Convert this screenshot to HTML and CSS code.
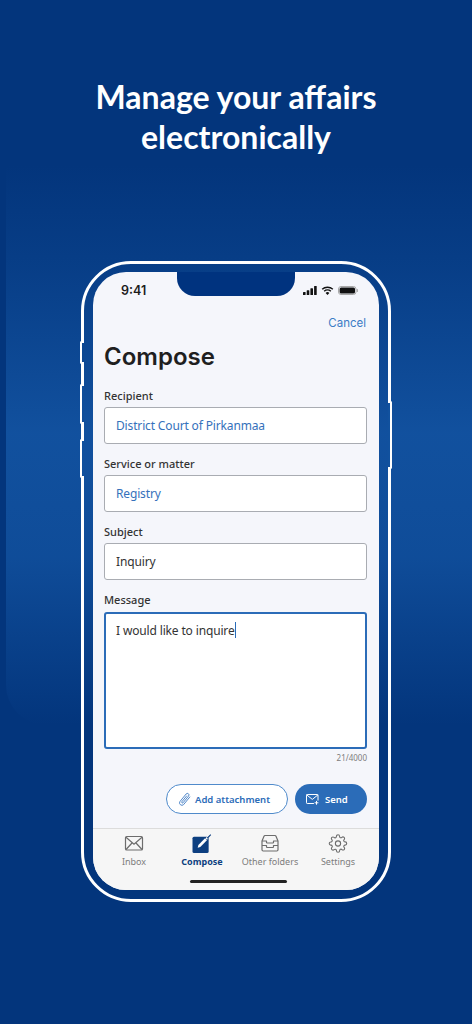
FILE: index.html
```html
<!DOCTYPE html>
<html lang="en">
<head>
<meta charset="utf-8">
<title>Compose</title>
<link rel="stylesheet" href="styles.css">
</head>
<body>
<main class="poster">
  <div class="glow"></div>
  <h1 class="headline">Manage your affairs<br>electronically</h1>
  <div class="phone">
    <span class="side s1"></span><span class="side s2"></span><span class="side s3"></span><span class="side s4"></span>
    <div class="screen">
      <div class="notch"></div>
      <div class="status">
        <span class="time">9:41</span>
        <span class="status-icons">
          <svg width="14" height="9" viewBox="0 0 14 9"><rect x="0" y="6" width="2.6" height="3" rx=".6"/><rect x="3.7" y="4.2" width="2.6" height="4.8" rx=".6"/><rect x="7.4" y="2.2" width="2.6" height="6.8" rx=".6"/><rect x="11.1" y="0" width="2.6" height="9" rx=".6"/></svg>
          <svg width="13" height="9" viewBox="0 0 13 9"><path d="M6.5 1.9c1.8 0 3.5.7 4.8 1.9l1-1A8.4 8.4 0 0 0 6.5.4 8.4 8.4 0 0 0 .7 2.8l1 1a7 7 0 0 1 4.8-1.9z"/><path d="M6.5 4.6c1.1 0 2 .4 2.8 1.1l1-1a5.6 5.6 0 0 0-7.6 0l1 1c.8-.7 1.7-1.1 2.8-1.1z"/><path d="M6.5 9 8.4 7a2.8 2.8 0 0 0-3.8 0z"/></svg>
          <svg width="20" height="9" viewBox="0 0 20 9"><rect x=".5" y=".5" width="17.5" height="8" rx="2.5" fill="none" stroke="#a8a8a8"/><rect x="1.6" y="1.5" width="15.4" height="6" rx="1.5"/><rect x="18.7" y="3" width="1.2" height="3" rx=".6" fill="#a8a8a8"/></svg>
        </span>
      </div>
      <div class="nav"><span class="cancel">Cancel</span></div>
      <div class="form">
        <h2 class="title">Compose</h2>
        <div class="field"><label class="label">Recipient</label><div class="input link">District Court of Pirkanmaa</div></div>
        <div class="field"><label class="label">Service or matter</label><div class="input link">Registry</div></div>
        <div class="field"><label class="label">Subject</label><div class="input">Inquiry</div></div>
        <div class="field"><label class="label label-message">Message</label><div class="textarea">I would like to inquire<span class="caret"></span></div></div>
        <div class="count">21/4000</div>
        <div class="actions">
          <span class="btn btn-outline">
            <svg width="13" height="15" viewBox="0 0 13 15" fill="none" stroke="#3f7cc4" stroke-width=".9" stroke-linecap="round"><path d="M11.8 5 5.600 12.600a2.400 2.400 0 0 1-3.700-3L8.100 2a1.600 1.600 0 0 1 2.500 2L5 10.800a.8.8 0 0 1-1.200-1L8.600 4"/></svg>
            Add attachment
          </span>
          <span class="btn btn-solid">
            <svg width="13" height="11" viewBox="0 0 13 11" fill="none" stroke="#fff" stroke-width="1" stroke-linecap="round" stroke-linejoin="round"><path d="M7.500 9.500H1.200a.7.7 0 0 1-.7-.7V1.200c0-.4.300-.7.700-.7h10.100c.4 0 .7.300.7.700v5"/><path d="m.8 1 5.500 4.400L11.800 1"/><path d="M10.500 7.300v3M9 8.800h3"/></svg>
            Send
          </span>
        </div>
      </div>
      <nav class="tabs">
        <div class="tab">
          <svg width="20" height="18" viewBox="0 0 20 18" fill="none" stroke="#6d6d6d" stroke-width="1.200"><rect x="1.500" y="2" width="17" height="13.500" rx="1.300"/><path d="m2 2.700 8 7 8-7M2 15l6-6.500M18 15l-6-6.500"/></svg>
          <span>Inbox</span>
        </div>
        <div class="tab active">
          <svg width="20" height="20" viewBox="0 0 20 20" fill="none"><rect x="0" y="3" width="17" height="17" rx="1.600" fill="#0d3f80"/><path d="m5.500 14.500.7-2.800 7-7.200 2 2-7 7.200z" fill="#fff"/><path d="m14.500 5.200 4.300-4.400" stroke="#fff" stroke-width="2.200"/><path d="m15.500 4.500 3.700-3.800" stroke="#0d3f80" stroke-width="1.300"/></svg>
          <span>Compose</span>
        </div>
        <div class="tab">
          <svg width="18" height="18" viewBox="0 0 18 18" fill="none" stroke="#6d6d6d" stroke-width="1.200" stroke-linejoin="round"><path d="M1 6.500 3 1.800c.2-.5.500-.8 1-.8h10c.5 0 .8.300 1 .8l2 4.700v8.800c0 .7-.5 1.200-1.200 1.200H2.200c-.7 0-1.200-.5-1.200-1.200z"/><path d="M1 6.500h4.500v1.300c0 .4.300.7.700.7h5.600c.4 0 .7-.3.700-.7V6.500H17M1 11h4.500v1.300c0 .4.300.7.700.7h5.600c.4 0 .7-.3.700-.7V11H17"/></svg>
          <span>Other folders</span>
        </div>
        <div class="tab">
          <svg width="20" height="20" viewBox="0 0 24 24" fill="none" stroke="#6d6d6d" stroke-width="1.400" stroke-linejoin="round"><circle cx="12" cy="12" r="3.300"/><path d="M19.400 15a1.650 1.650 0 0 0 .33 1.820l.06.06a2 2 0 0 1 0 2.830 2 2 0 0 1-2.830 0l-.06-.06a1.650 1.650 0 0 0-1.820-.33 1.650 1.650 0 0 0-1 1.510V21a2 2 0 0 1-2 2 2 2 0 0 1-2-2v-.09A1.650 1.650 0 0 0 9 19.400a1.650 1.650 0 0 0-1.820.33l-.06.06a2 2 0 0 1-2.830 0 2 2 0 0 1 0-2.830l.06-.06a1.650 1.650 0 0 0 .33-1.820 1.650 1.650 0 0 0-1.510-1H3a2 2 0 0 1-2-2 2 2 0 0 1 2-2h.09A1.650 1.650 0 0 0 4.600 9a1.650 1.650 0 0 0-.33-1.820l-.06-.06a2 2 0 0 1 0-2.830 2 2 0 0 1 2.830 0l.06.06a1.650 1.650 0 0 0 1.820.33H9a1.650 1.650 0 0 0 1-1.510V3a2 2 0 0 1 2-2 2 2 0 0 1 2 2v.09a1.650 1.650 0 0 0 1 1.510 1.650 1.650 0 0 0 1.820-.33l.06-.06a2 2 0 0 1 2.830 0 2 2 0 0 1 0 2.830l-.06.06a1.650 1.650 0 0 0-.33 1.820V9a1.650 1.650 0 0 0 1.510 1H21a2 2 0 0 1 2 2 2 2 0 0 1-2 2h-.09a1.650 1.650 0 0 0-1.510 1z"/></svg>
          <span>Settings</span>
        </div>
      </nav>
      <div class="home-wrap"><div class="home"></div></div>
    </div>
  </div>
</main>
</body>
</html>
```
FILE: styles.css
```css
* { box-sizing: border-box; }
html, body { margin: 0; padding: 0; }
body { background: #03357c; font-family: "Noto Sans", sans-serif; }
.poster { position: relative; width: 472px; height: 1024px; overflow: hidden; background: #03357c; padding-top: 77px; }
.glow { position: absolute; left: 6px; right: -40px; top: 165px; height: 560px; border-radius: 0 0 0 40px; background: linear-gradient(180deg, rgba(18,82,160,0) 0, rgba(18,82,160,.3) 18%, rgba(18,82,160,.95) 48%, rgba(18,82,160,.8) 70%, rgba(18,82,160,0) 100%); }
.headline { position: relative; margin: 0; text-align: center; color: #fff; font-family: "Lato", sans-serif; font-size: 32px; line-height: 40px; font-weight: 700; }
.phone { position: relative; width: 310px; height: 641px; margin: 104px 0 0 81px; border: 3px solid #fff; border-radius: 50px; padding: 8px 9px; }
.side { position: absolute; width: 4px; border: 2px solid #fff; border-right: 0; left: -4px; border-radius: 2px 0 0 2px; }
.s1 { top: 77px; height: 23px; background: #0c4792; }
.s2 { top: 119.500px; height: 40px; background: #0f4d9a; }
.s3 { top: 175px; height: 39px; background: #10509e; }
.s4 { left: auto; right: -4px; top: 136.500px; height: 68px; border: 2px solid #fff; border-left: 0; border-radius: 0 2px 2px 0; background: #11519e; }
.screen { position: relative; width: 286px; height: 618px; background: #f5f6fb; border-radius: 33px; overflow: hidden; display: flex; flex-direction: column; }
.notch { position: absolute; left: 84px; top: 0; width: 118px; height: 24px; background: #00337f; border-radius: 0 0 18px 18px; }
.status { display: flex; justify-content: space-between; align-items: center; height: 36px; padding: 1px 21px 0 28px; }
.time { font: 600 12.500px "Inter", sans-serif; color: #1c1c1c; }
.status-icons { display: flex; align-items: center; gap: 4px; }
.status-icons svg { fill: #111; display: block; }
.nav { display: flex; justify-content: flex-end; padding: 8px 13px 0; height: 28px; }
.cancel { font: 400 11.500px "Inter", sans-serif; color: #3c7cc6; }
.form { padding: 0 12px 0 11px; flex: 1; }
.title { margin: 3px 0 0; font: 600 24px/36px "Inter", sans-serif; color: #1f1f1f; height: 35px; }
.field { margin-top: 12px; }
.title + .field { margin-top: 14px; }
.label { display: block; font-size: 11px; font-weight: 500; line-height: 16px; color: #333; margin-bottom: 3px; }
.label-message { margin-bottom: 4px; }
.input { height: 37px; background: #fff; border: 1px solid #a9acb2; border-radius: 3px; font-size: 12px; letter-spacing: -.15px; line-height: 35px; padding-left: 11px; color: #333; }
.input.link { color: #3571bb; }
.textarea { height: 137px; background: #fff; border: 2px solid #2b6cb8; border-radius: 3px; font-size: 12px; letter-spacing: -.15px; line-height: 20px; padding: 7px 10px; color: #333; }
.caret { display: inline-block; width: 1px; height: 16px; background: #2b6cb8; vertical-align: -3px; }
.count { text-align: right; font-size: 8px; color: #7d7d7d; line-height: 12px; margin-top: 3px; }
.actions { display: flex; justify-content: flex-end; gap: 7px; margin-top: 20px; }
.btn { display: flex; align-items: center; height: 30px; border-radius: 15px; font-size: 9.500px; font-weight: 600; }
.btn-outline { width: 122px; padding-left: 11px; gap: 4px; background: #fff; border: 1px solid #4f8acb; color: #2b6cb8; }
.btn-solid { width: 72px; padding-left: 11px; gap: 6px; background: #2b6cb8; color: #fff; }
.tabs { display: grid; grid-template-columns: 68px 68px 68px 68px; justify-content: center; height: 40px; background: #f6f6f6; border-top: 1px solid #dcdcdc; padding-top: 5px; }
.tab { display: flex; flex-direction: column; align-items: center; gap: 3px; font-size: 9px; color: #7d7d7d; line-height: 12px; white-space: nowrap; }
.tab svg { height: 19px; }
.tab.active { color: #0d3f80; font-weight: 700; }
.home-wrap { background: #f6f6f6; height: 22px; padding-top: 12px; }
.home { width: 97px; height: 3px; border-radius: 2px; background: #222; margin-left: 97px; }
```
